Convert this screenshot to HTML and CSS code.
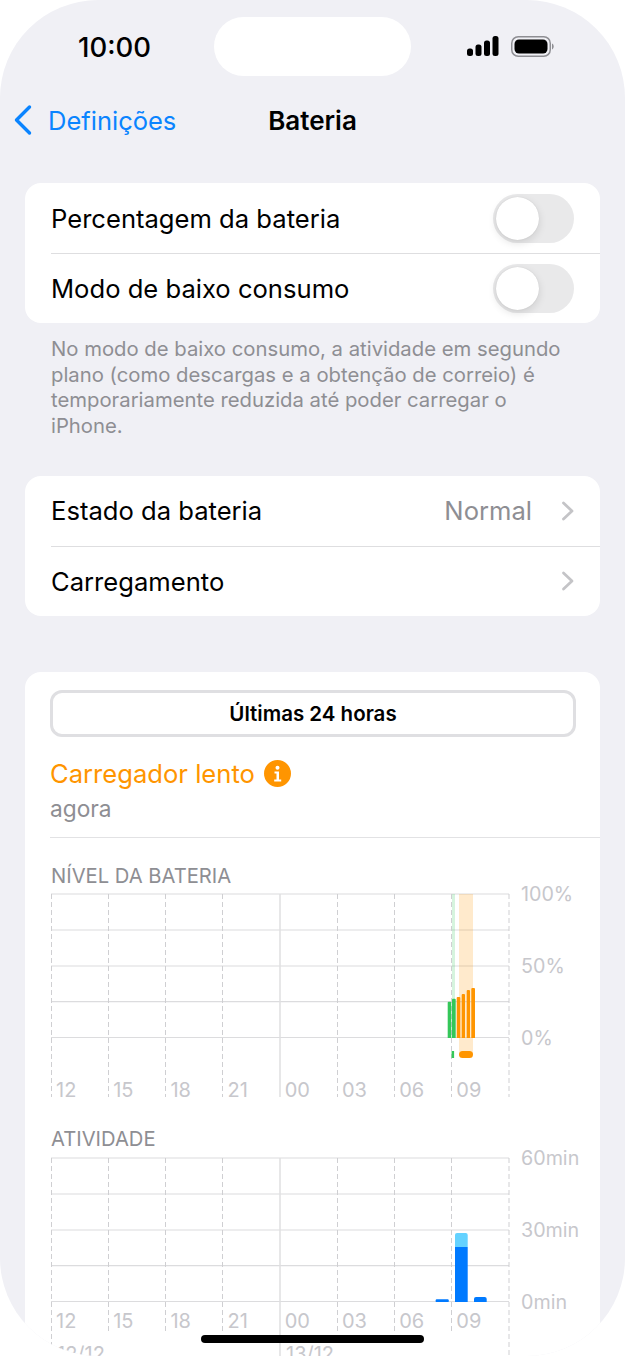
FILE: index.html
```html
<!DOCTYPE html>
<html lang="pt">
<head>
    <meta charset="UTF-8">
    <meta name="viewport" content="width=device-width, initial-scale=1.0">
    <title>Bateria</title>
    <link rel="stylesheet" href="styles.css">
</head>
<body>

    <div class="screen">

        <!-- Status bar -->
        <div class="status-bar">
            <span class="clock">10:00</span>
            <div class="island"></div>
            <div class="status-icons">
                <svg class="signal" width="32" height="20" viewBox="0 0 32 20">
                    <rect x="0" y="12.500" width="6" height="7.500" rx="2.500"/>
                    <rect x="8.500" y="8.500" width="6" height="11.500" rx="2.500"/>
                    <rect x="17" y="4.500" width="6" height="15.500" rx="2.500"/>
                    <rect x="25.500" y="0" width="6" height="20" rx="2.500"/>
                </svg>
                <svg class="battery" width="43" height="21" viewBox="0 0 43 21">
                    <rect x="0.750" y="0.750" width="38.500" height="19.500" rx="6.500" fill="none" stroke="#8e8e93" stroke-width="1.500"/>
                    <rect x="3.500" y="3.500" width="33" height="14" rx="4.500"/>
                    <path d="M41 7.500v6c1-.4 1.700-1.600 1.700-3s-.7-2.600-1.700-3z" fill="#8e8e93"/>
                </svg>
            </div>
        </div>

        <!-- Nav bar -->
        <div class="nav-bar">
            <a class="back" href="#">
                <svg width="20" height="32" viewBox="0 0 20 32">
                    <path d="M16.500 3 L3.500 16 L16.500 29" fill="none" stroke="#0a84ff" stroke-width="3.400" stroke-linecap="round" stroke-linejoin="round"/>
                </svg>
                <span>Definições</span>
            </a>
            <div class="nav-title">Bateria</div>
        </div>

        <!-- Toggles -->
        <div class="group">
            <div class="row">
                <span class="row-label">Percentagem da bateria</span>
                <div class="switch"><div class="knob"></div></div>
            </div>
            <div class="row row-sep">
                <span class="row-label">Modo de baixo consumo</span>
                <div class="switch"><div class="knob"></div></div>
            </div>
        </div>
        <p class="footnote">No modo de baixo consumo, a atividade em segundo plano (como descargas e a obtenção de correio) é temporariamente reduzida até poder carregar o iPhone.</p>

        <!-- Links -->
        <div class="group group-links">
            <div class="row">
                <span class="row-label">Estado da bateria</span>
                <span class="row-value">Normal</span>
                <svg class="chevron" width="14" height="20" viewBox="0 0 14 20">
                    <path d="M2.500 2 L11 10 L2.500 18" fill="none" stroke="#c4c4c7" stroke-width="2.800" stroke-linecap="round" stroke-linejoin="round"/>
                </svg>
            </div>
            <div class="row row-sep">
                <span class="row-label">Carregamento</span>
                <svg class="chevron" width="14" height="20" viewBox="0 0 14 20">
                    <path d="M2.500 2 L11 10 L2.500 18" fill="none" stroke="#c4c4c7" stroke-width="2.800" stroke-linecap="round" stroke-linejoin="round"/>
                </svg>
            </div>
        </div>

        <!-- Usage card -->
        <div class="group usage-card">
            <div class="segment">Últimas 24 horas</div>

            <div class="charger">
                <span>Carregador lento</span>
                <svg width="27" height="27" viewBox="0 0 27 27">
                    <circle cx="13.500" cy="13.500" r="13.500" fill="#ff9500"/>
                    <circle cx="13.500" cy="7.800" r="2" fill="#fff"/>
                    <path d="M10.500 11.500h4.500v8h2.200v2h-7v-2h2.300v-6h-2z" fill="#fff"/>
                </svg>
            </div>
            <div class="charger-time">agora</div>
            <div class="card-line"></div>

            <div class="chart-title">NÍVEL DA BATERIA</div>
            <div class="chart chart-level">
                <svg width="525" height="210" viewBox="0 0 525 210">
                    <path class="grid-h" d="M0 1H458M0 37H458M0 73H458M0 108.700H458M0 144.500H458"/>
                    <path class="grid-noon" d="M229 1V204"/>
                    <path class="grid-v" d="M0.500 1V204M57.500 1V204M114.500 1V204M171.500 1V204M286.500 1V204M343.500 1V204M400.500 1V204M458 1V204"/>
                    <rect x="401" y="1" width="3" height="144" fill="#34c759" opacity=".2"/>
                    <rect x="408" y="1" width="14" height="160" fill="#ff9500" opacity=".2"/>
                    <path d="M396.700 145V109.700a1 1 0 0 1 1-1h1.600a1 1 0 0 1 1 1V145z" fill="#34c759"/>
                    <path d="M401 145V106.700a1 1 0 0 1 1-1h1.700a1 1 0 0 1 1 1V145z" fill="#34c759"/>
                    <path d="M405.700 145V105a1 1 0 0 1 1-1h1.600a1 1 0 0 1 1 1V145z" fill="#ff9500"/>
                    <path d="M410.700 145V102a1 1 0 0 1 1-1h1.300a1 1 0 0 1 1 1V145z" fill="#ff9500"/>
                    <path d="M415.700 145V98a1 1 0 0 1 1-1h1.300a1 1 0 0 1 1 1V145z" fill="#ff9500"/>
                    <path d="M420.300 145V96a1 1 0 0 1 1-1h1.700a1 1 0 0 1 1 1V145z" fill="#ff9500"/>
                    <rect x="400.600" y="158" width="2.500" height="7" fill="#34c759"/>
                    <rect x="408" y="158" width="14" height="7" rx="3.500" fill="#ff9500"/>
                </svg>
                <span class="y-label y-top">100%</span>
                <span class="y-label y-mid">50%</span>
                <span class="y-label y-low">0%</span>
                <div class="x-labels">
                    <span>12</span><span>15</span><span>18</span><span>21</span><span>00</span><span>03</span><span>06</span><span>09</span>
                </div>
            </div>

            <div class="chart-title">ATIVIDADE</div>
            <div class="chart chart-activity">
                <svg width="525" height="210" viewBox="0 0 525 210">
                    <path class="grid-h" d="M0 1H458M0 37H458M0 73H458M0 108.700H458M0 144.500H458"/>
                    <path class="grid-noon" d="M229 1V210"/>
                    <path class="grid-v" d="M0.500 1V188M57.500 1V174M114.500 1V174M171.500 1V174M286.500 1V174M343.500 1V174M400.500 1V174M458 1V210"/>
                    <path d="M384.700 145V143.300a1 1 0 0 1 1-1h11a1 1 0 0 1 1 1V145z" fill="#007aff"/>
                    <path d="M404 90V78a2 2 0 0 1 2-2h8.700a2 2 0 0 1 2 2V90z" fill="#64d2ff"/>
                    <rect x="404" y="90" width="12.700" height="55" fill="#007aff"/>
                    <path d="M423 145V142a2 2 0 0 1 2-2h8.700a2 2 0 0 1 2 2V145z" fill="#007aff"/>
                </svg>
                <span class="y-label y-top">60min</span>
                <span class="y-label y-mid">30min</span>
                <span class="y-label y-low">0min</span>
                <div class="x-labels">
                    <span>12</span><span>15</span><span>18</span><span>21</span><span>00</span><span>03</span><span>06</span><span>09</span>
                </div>
                <div class="dates">
                    <span>12/12</span><span>13/12</span>
                </div>
            </div>
        </div>

        <div class="home-bar"></div>
    </div>

</body>
</html>
```
FILE: styles.css
```css
body {
    font-family: Inter, 'Noto Sans', sans-serif;
    margin: 0;
    padding: 0;
    background-color: white;
    color: black;
}

.screen {
    position: relative;
    width: 625px;
    height: 1356px;
    overflow: hidden;
    background-color: #f0f0f5;
    border-radius: 98px;
}

/* Status bar */
.status-bar {
    height: 93px;
    display: flex;
    align-items: flex-start;
    padding: 17px 0 0 78px;
    box-sizing: border-box;
}

.clock {
    width: 136px;
    margin-top: 12px;
    font-size: 27.500px;
    line-height: 36px;
    font-weight: 500;
}

.island {
    width: 197px;
    height: 59px;
    background: white;
    border-radius: 30px;
}

.status-icons {
    display: flex;
    align-items: flex-start;
    gap: 12px;
    margin: 19px 0 0 56px;
}

.signal {
    display: block;
}

.battery {
    display: block;
}

/* Nav bar */
.nav-bar {
    position: relative;
    height: 54px;
    display: flex;
    align-items: center;
    justify-content: center;
}

.back {
    position: absolute;
    left: 13px;
    top: 11px;
    display: flex;
    align-items: center;
    gap: 15px;
    color: #0a84ff;
    text-decoration: none;
    font-size: 25.500px;
}

.nav-title {
    font-size: 26px;
    font-weight: 600;
}

/* Groups */
.group {
    margin: 36px 25px 0 25px;
    background: white;
    border-radius: 16px;
    overflow: hidden;
}

.group-links {
    margin-top: 37px;
}

.row {
    height: 70px;
    padding: 1px 26px 0 26px;
    display: flex;
    align-items: center;
    font-size: 25.600px;
    box-sizing: border-box;
}

.group-links .row {
    padding-top: 0;
}

.row-sep {
    border-top: 1px solid #dedee0;
    margin-left: 26px;
    padding-left: 0;
    padding-top: 0;
}

.row-label {
    flex: 1;
}

.row-value {
    color: #8e8e93;
    margin-right: 29px;
}

.chevron {
    margin-right: -1px;
}

.switch {
    width: 81px;
    height: 49px;
    border-radius: 25px;
    background: #e9e9ea;
    padding: 3px;
    box-sizing: border-box;
}

.knob {
    width: 43px;
    height: 43px;
    border-radius: 50%;
    background: white;
    box-shadow: 0 3px 8px rgba(0, 0, 0, 0.12), 0 0 1px rgba(0, 0, 0, 0.15);
}

.footnote {
    margin: 13px 60px 0 51px;
    font-size: 20.300px;
    line-height: 25.700px;
    color: #8e8e93;
}

/* Usage card */
.usage-card {
    margin-top: 56px;
    padding-top: 18px;
    height: 800px;
    box-sizing: border-box;
}

.segment {
    margin: 0 24px 0 25px;
    height: 47px;
    border: 3px solid #dfdfe2;
    border-radius: 12px;
    box-sizing: border-box;
    display: flex;
    align-items: center;
    justify-content: center;
    font-size: 20.500px;
    font-weight: 600;
}

.charger {
    margin: 21px 0 0 25px;
    display: flex;
    align-items: center;
    gap: 9px;
    font-size: 25.600px;
    line-height: 32px;
    color: #ff9500;
}

.charger-time {
    margin: 4px 0 0 25px;
    font-size: 22.700px;
    line-height: 30px;
    color: #8e8e93;
}

.card-line {
    margin: 13px 0 0 25px;
    border-top: 1px solid #e2e2e4;
}

.chart-title {
    margin: 26px 0 0 26px;
    font-size: 20.200px;
    line-height: 24px;
    color: #8e8e93;
}

.chart {
    position: relative;
    margin: 5px 0 0 26px;
    height: 210px;
}

.chart-level {
    height: 208px;
}

.chart-activity {
    margin-top: 6px;
}

.chart svg {
    display: block;
}

.grid-h {
    fill: none;
    stroke: #dcdcde;
    stroke-width: 1.200;
}

.grid-noon {
    fill: none;
    stroke: #dfdfe1;
    stroke-width: 1.500;
}

.grid-v {
    fill: none;
    stroke: #cfcfd2;
    stroke-width: 1;
    stroke-dasharray: 5 3;
}

.y-label {
    position: absolute;
    left: 470px;
    font-size: 19.700px;
    line-height: 24px;
    color: #c7c7cc;
}

.y-top {
    top: -11px;
}

.y-mid {
    top: 61px;
}

.y-low {
    top: 133px;
}

.x-labels {
    position: absolute;
    left: 0;
    top: 185px;
    display: flex;
    font-size: 20px;
    line-height: 24px;
    color: #c7c7cc;
}

.chart-activity .x-labels {
    top: 152px;
}

.x-labels span {
    width: 57.200px;
    padding-left: 5px;
    box-sizing: border-box;
}

.dates {
    position: absolute;
    left: 6px;
    top: 185px;
    display: flex;
    font-size: 20px;
    line-height: 24px;
    color: #c7c7cc;
}

.dates span {
    width: 229px;
}

.home-bar {
    position: absolute;
    left: 201px;
    bottom: 13px;
    width: 223px;
    height: 8px;
    background: black;
    border-radius: 4px;
}
```
